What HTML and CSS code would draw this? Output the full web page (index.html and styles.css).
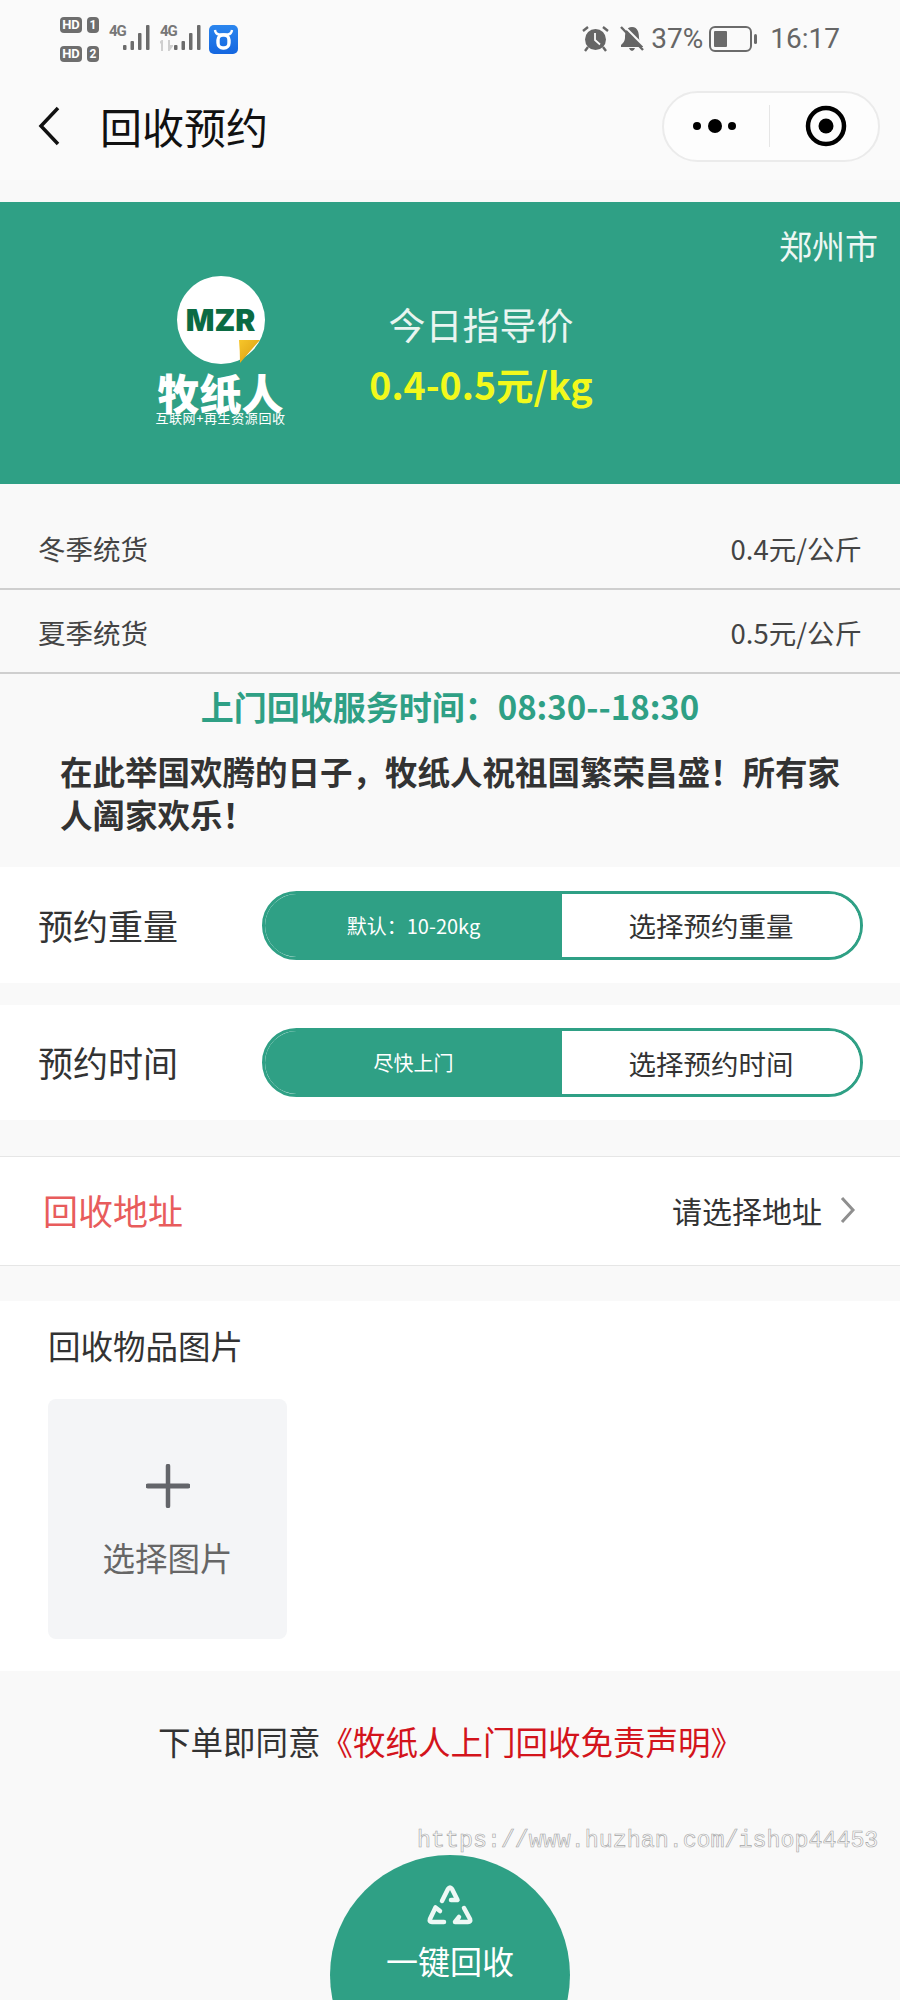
FILE: index.html
```html
<!DOCTYPE html>
<html lang="zh-CN">

<head>
    <meta charset="UTF-8">
    <meta name="viewport" content="width=device-width, initial-scale=1.0">
    <title>回收预约</title>
    <link rel="stylesheet" href="styles.css">
</head>

<body>
<div class="page">

    <header class="top">
        <div class="status">
            <div class="status-left">
                <div class="hd-col">
                    <div class="hd-row"><span class="hd">HD</span><span class="sim">1</span></div>
                    <div class="hd-row"><span class="hd">HD</span><span class="sim">2</span></div>
                </div>
                <div class="signal">
                    <span class="net">4G</span>
                    <svg width="28" height="26" viewBox="0 0 28 26"><g fill="#6b6b6b"><rect x="0" y="20" width="3.500" height="5" rx="1"/><rect x="7.500" y="16" width="3.500" height="9" rx="1"/><rect x="15" y="8" width="3.500" height="17" rx="1"/><rect x="23" y="0" width="3.500" height="25" rx="1"/></g></svg>
                </div>
                <div class="signal signal-second">
                    <span class="net">4G</span>
                    <svg class="updown" width="13" height="11" viewBox="0 0 13 11"><path d="M2 11 V1 L0 3 M9 0 V10 L12 6 H9" fill="none" stroke="#cfcfcf" stroke-width="2"/></svg>
                    <svg width="28" height="26" viewBox="0 0 28 26"><g fill="#6b6b6b"><rect x="0" y="20" width="3.500" height="5" rx="1"/><rect x="7.500" y="16" width="3.500" height="9" rx="1"/><rect x="15" y="8" width="3.500" height="17" rx="1"/><rect x="23" y="0" width="3.500" height="25" rx="1"/></g></svg>
                </div>
                <svg class="app-icon" width="29" height="29" viewBox="0 0 29 29">
                    <defs><linearGradient id="blue" x1="0" y1="0" x2="0" y2="1"><stop offset="0" stop-color="#2b86ee"/><stop offset="1" stop-color="#1466e0"/></linearGradient></defs>
                    <rect width="29" height="29" rx="5" fill="url(#blue)"/>
                    <path d="M6 5 Q6.500 9 10 9.500 H19 Q22.500 9 23 5" fill="none" stroke="#fff" stroke-width="2.400"/>
                    <rect x="9" y="10" width="11" height="13" rx="5" fill="none" stroke="#fff" stroke-width="3.400"/>
                </svg>
            </div>
            <div class="status-right">
                <svg width="27" height="26" viewBox="0 0 27 26">
                    <circle cx="13.500" cy="13.500" r="10.500" fill="#666"/>
                    <path d="M13 7 V14 L18 18.500" fill="none" stroke="#fafafa" stroke-width="1.800"/>
                    <path d="M1 5 L6 1 M26 5 L21 1 M6 21 L3 25 M21 21 L24 25" stroke="#666" stroke-width="2.400"/>
                </svg>
                <svg class="bell" width="24" height="26" viewBox="0 0 24 26">
                    <path d="M12 1 C6 1 5 7 5 12 C5 15 3 17 1 19 V21 H23 V19 C21 17 19 15 19 12 C19 7 18 1 12 1 Z" fill="#666"/>
                    <path d="M9 22 H15 Q14 25 12 25 Q10 25 9 22 Z" fill="#666"/>
                    <path d="M3 -1 L25 21" stroke="#fafafa" stroke-width="2"/>
                    <path d="M1 1 L23 24" stroke="#666" stroke-width="2.400"/>
                </svg>
                <span class="pct">37%</span>
                <svg class="battery" width="49" height="26" viewBox="0 0 49 26">
                    <rect x="1" y="1" width="41" height="24" rx="5" fill="none" stroke="#6b6b6b" stroke-width="2"/>
                    <rect x="5" y="5" width="13" height="16" rx="1" fill="#6b6b6b"/>
                    <rect x="45" y="8" width="3" height="10" rx="1.500" fill="#6b6b6b"/>
                </svg>
                <span class="clock">16:17</span>
            </div>
        </div>
        <div class="nav">
            <svg class="back" width="24" height="40" viewBox="0 0 24 40"><path d="M21 2 L4 20 L21 38" fill="none" stroke="#111" stroke-width="3.500"/></svg>
            <div class="nav-title">回收预约</div>
            <div class="capsule">
                <div class="capsule-part">
                    <svg width="46" height="16" viewBox="0 0 46 16"><circle cx="4" cy="8" r="4"/><circle cx="22" cy="8" r="7"/><circle cx="39" cy="8" r="4"/></svg>
                </div>
                <div class="capsule-line"></div>
                <div class="capsule-part capsule-part-right">
                    <svg width="42" height="42" viewBox="0 0 42 42"><circle cx="21" cy="21" r="18" fill="none" stroke="#000" stroke-width="4.500"/><circle cx="21" cy="21" r="7.500"/></svg>
                </div>
            </div>
        </div>
    </header>

    <section class="banner">
        <div class="city">郑州市</div>
        <div class="banner-body">
            <div class="logo">
                <div class="logo-circle">
                    <span class="logo-mzr">MZR</span>
                    <svg class="logo-curl" width="24" height="26" viewBox="0 0 24 26">
                        <defs><linearGradient id="curl" x1="0" y1="0" x2="1" y2="1"><stop offset="0" stop-color="#f7c62a"/><stop offset="1" stop-color="#d99a10"/></linearGradient></defs>
                        <path d="M1 1 H22 Q14 10 2 24 Q2 12 1 1 Z" fill="url(#curl)"/>
                    </svg>
                </div>
                <div class="logo-name">牧纸人</div>
                <div class="logo-sub">互联网+再生资源回收</div>
            </div>
            <div class="guide">
                <div class="guide-label">今日指导价</div>
                <div class="guide-price">0.4-0.5元/kg</div>
            </div>
        </div>
    </section>

    <section class="prices">
        <div class="price-row"><span>冬季统货</span><span>0.4元/公斤</span></div>
        <div class="price-row"><span>夏季统货</span><span>0.5元/公斤</span></div>
    </section>

    <section class="notice">
        <div class="service-time">上门回收服务时间：08:30--18:30</div>
        <p class="notice-text">在此举国欢腾的日子，牧纸人祝祖国繁荣昌盛！所有家人阖家欢乐！</p>
    </section>

    <section class="form-row">
        <div class="form-label">预约重量</div>
        <div class="pill">
            <div class="pill-left">默认：10-20kg</div>
            <div class="pill-right">选择预约重量</div>
        </div>
    </section>

    <section class="form-row form-row-second">
        <div class="form-label">预约时间</div>
        <div class="pill">
            <div class="pill-left">尽快上门</div>
            <div class="pill-right">选择预约时间</div>
        </div>
    </section>

    <section class="address">
        <div class="address-label">回收地址</div>
        <div class="address-value">
            <span>请选择地址</span>
            <svg width="16" height="28" viewBox="0 0 16 28"><path d="M2 2 L13 14 L2 26" fill="none" stroke="#8f8f8f" stroke-width="3"/></svg>
        </div>
    </section>

    <section class="photos">
        <div class="photos-title">回收物品图片</div>
        <div class="upload">
            <svg width="44" height="44" viewBox="0 0 44 44"><path d="M22 2 V42" stroke="#63656a" stroke-width="4.500" stroke-linecap="round"/><path d="M2 22 H42" stroke="#63656a" stroke-width="5" stroke-linecap="round"/></svg>
            <div class="upload-text">选择图片</div>
        </div>
    </section>

    <div class="agree">下单即同意<span class="agree-link">《牧纸人上门回收免责声明》</span></div>

    <div class="go-btn">
        <svg width="46" height="44" viewBox="0 0 46 44" fill="none" stroke="#eef8f5" stroke-width="4.500" stroke-linejoin="round" stroke-linecap="round">
            <path d="M15 18 L21 6 Q23 3 25 6 L30.500 17 H24"/>
            <path d="M13 28 L8.500 24.500 L3 36 Q2 39 5 39 H17"/>
            <path d="M37 25 L43 36 Q44 39 41 39 H28 L32 34"/>
        </svg>
        <div class="go-text">一键回收</div>
    </div>

    <div class="watermark">https://www.huzhan.com/ishop44453</div>

</div>
</body>

</html>
```

FILE: styles.css
```css
/* General Styles */
* {
    margin: 0;
    padding: 0;
    box-sizing: border-box;
}

html, body {
    height: 2000px;
    overflow: hidden;
}

body {
    background-color: #f9f9f9;
    font-family: "Noto Sans CJK SC", "Noto Sans", sans-serif;
    color: #333;
}

.page {
    position: relative;
    width: 900px;
    height: 2000px;
    overflow: hidden;
}

/* Status bar and nav */
.top {
    height: 180px;
    background: #fafafa;
}

.status {
    height: 78px;
    padding: 0 60px;
    display: flex;
    justify-content: space-between;
    align-items: center;
    color: #666;
}

.status-left, .status-right {
    display: flex;
    align-items: center;
}

.hd-col {
    display: flex;
    flex-direction: column;
    gap: 13px;
}

.hd-row {
    display: flex;
    gap: 5px;
}

.hd, .sim {
    height: 16px;
    background: #6e6e6e;
    color: #fff;
    border-radius: 4px;
    font: bold 13px/16px "Roboto", sans-serif;
    text-align: center;
}

.hd {
    width: 22px;
}

.sim {
    width: 12px;
    font-size: 12px;
}

.signal {
    position: relative;
    display: flex;
    align-items: flex-start;
    margin-left: 10px;
    height: 26px;
    margin-top: -3px;
}

.signal-second {
    margin-left: 9px;
}

.net {
    width: 14px;
    font: bold 15px/13px "Roboto", sans-serif;
    letter-spacing: -1.200px;
    color: #777;
}

.updown {
    position: absolute;
    left: 0;
    top: 15px;
}

.app-icon {
    margin-left: 7px;
}

.bell {
    margin-left: 11px;
}

.pct, .clock {
    font: 28px/34px "Roboto", sans-serif;
    color: #666;
}

.pct {
    margin-left: 7px;
}

.battery {
    margin-left: 6px;
}

.clock {
    margin-left: 12px;
}

.nav {
    height: 102px;
    padding: 0 20px 6px 37px;
    display: flex;
    align-items: center;
}

.nav-title {
    margin-left: 39px;
    font-size: 42px;
    line-height: 60px;
    color: #111;
    flex: 1;
}

.capsule {
    width: 218px;
    height: 71px;
    border: 2px solid #ebebeb;
    border-radius: 36px;
    background: #fdfdfd;
    display: flex;
    align-items: center;
}

.capsule-part {
    flex: 1;
    display: flex;
    justify-content: center;
}

.capsule-part-right {
    padding-left: 4px;
}

.capsule-line {
    width: 1px;
    height: 42px;
    background: #e6e6e6;
}

/* Green banner */
.banner {
    margin-top: 22px;
    height: 282px;
    background: #2fa085;
    padding-top: 23px;
}

.city {
    text-align: right;
    padding-right: 22px;
    font-size: 33px;
    line-height: 40px;
    color: #eef7f4;
}

.banner-body {
    display: flex;
    margin-top: 11px;
    padding-left: 155px;
}

.logo {
    width: 131px;
    display: flex;
    flex-direction: column;
    align-items: center;
}

.logo-circle {
    position: relative;
    width: 88px;
    height: 88px;
    border-radius: 50%;
    background: #fff;
    display: flex;
    align-items: center;
    justify-content: center;
}

.logo-mzr {
    font: 900 30px/30px "Inter", "Liberation Sans", sans-serif;
    color: #0b6b43;
}

.logo-curl {
    position: absolute;
    left: 61px;
    top: 63px;
}

.logo-name {
    margin-top: 10px;
    font-size: 42px;
    line-height: 35px;
    font-weight: 900;
    color: #fff;
    white-space: nowrap;
}

.logo-sub {
    margin-top: 1px;
    font-size: 13px;
    line-height: 16px;
    letter-spacing: 0.600px;
    color: #fff;
    white-space: nowrap;
}

.guide {
    margin: 23px 0 0 82px;
    width: 226px;
    text-align: center;
}

.guide-label {
    font-size: 37px;
    line-height: 50px;
    color: #e9f5f1;
}

.guide-price {
    margin-top: 10px;
    font-size: 37.500px;
    line-height: 50px;
    font-weight: 700;
    color: #f2f91c;
    white-space: nowrap;
}

/* Price list */
.prices {
    padding-top: 22px;
}

.price-row {
    height: 84px;
    padding: 1px 38px 0 38px;
    display: flex;
    justify-content: space-between;
    align-items: center;
    border-bottom: 2px solid #cfcfcf;
    font-size: 27.500px;
    color: #444;
}

/* Notice */
.notice {
    padding: 10px 60px 32px;
}

.service-time {
    text-align: center;
    font-size: 33px;
    line-height: 44px;
    font-weight: 700;
    color: #2fa085;
    white-space: nowrap;
}

.notice-text {
    margin-top: 21px;
    font-size: 32.500px;
    line-height: 43px;
    font-weight: 700;
    color: #333;
}

/* Form rows */
.form-row {
    height: 116px;
    background: #fff;
    padding: 0 37px 0 38px;
    display: flex;
    align-items: center;
    justify-content: space-between;
}

.form-row-second {
    margin-top: 22px;
    height: 115px;
}

.form-label {
    font-size: 35px;
    padding-bottom: 2px;
    color: #333;
}

.pill {
    width: 601px;
    height: 69px;
    display: flex;
    border: 3px solid #2fa085;
    border-radius: 35px;
    overflow: hidden;
}

.pill-left {
    width: 297px;
    background: #2fa085;
    color: #fff;
    font-size: 20px;
    display: flex;
    align-items: center;
    justify-content: center;
}

.pill-right {
    flex: 1;
    background: #fff;
    color: #333;
    font-size: 27.500px;
    display: flex;
    align-items: center;
    justify-content: center;
}

/* Address */
.address {
    margin-top: 36px;
    height: 110px;
    background: #fff;
    border-top: 1px solid #e6e6e6;
    border-bottom: 1px solid #e6e6e6;
    padding: 0 44px 0 43px;
    display: flex;
    align-items: center;
    justify-content: space-between;
}

.address-label {
    font-size: 35px;
    padding-bottom: 4px;
    color: #e85c5c;
}

.address-value {
    display: flex;
    align-items: center;
    gap: 18px;
    font-size: 30px;
    padding-bottom: 2px;
    color: #333;
}

/* Photos */
.photos {
    margin-top: 35px;
    height: 370px;
    background: #fff;
    padding: 24px 48px 0;
}

.photos-title {
    font-size: 32.500px;
    line-height: 40px;
    color: #333;
}

.upload {
    margin-top: 34px;
    width: 239px;
    height: 240px;
    background: #f4f5f7;
    border-radius: 8px;
    display: flex;
    flex-direction: column;
    align-items: center;
    padding-top: 65px;
}

.upload-text {
    margin-top: 27px;
    font-size: 32.500px;
    line-height: 44px;
    color: #666;
}

/* Agreement and button */
.agree {
    margin-top: 48px;
    font-size: 32.500px;
    line-height: 44px;
    color: #333;
    padding-left: 158px;
    white-space: nowrap;
}

.agree-link {
    color: #d3141c;
}

.go-btn {
    margin: 92px auto 0;
    width: 240px;
    height: 240px;
    border-radius: 50%;
    background: #2fa085;
    display: flex;
    flex-direction: column;
    align-items: center;
    padding-top: 28px;
}

.go-text {
    margin-top: 13px;
    font-size: 32px;
    line-height: 40px;
    color: #fff;
}

.watermark {
    position: absolute;
    left: 417px;
    top: 1825px;
    font: 23.300px/32px "Liberation Mono", monospace;
    color: #fafafa;
    -webkit-text-stroke: 0.600px #a5a5a5;
    white-space: nowrap;
}
```
